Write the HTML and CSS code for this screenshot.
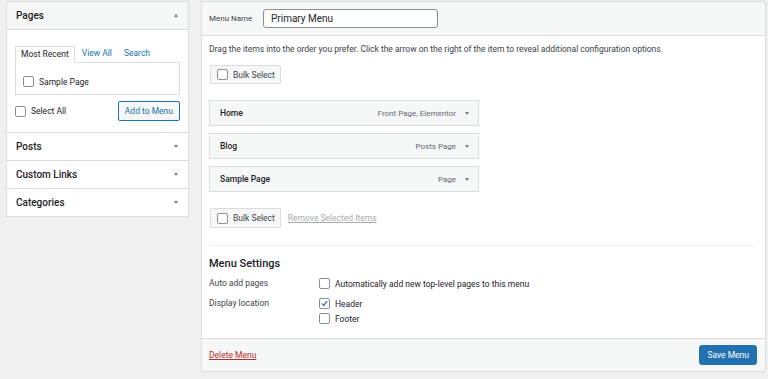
FILE: index.html
```html
<!DOCTYPE html>
<html>
	<head>
		<meta charset="UTF-8">
		<title>Menus</title>
		<link rel="stylesheet" href="styles.css">
	</head>
	<body>
		<div class="page">
			<!-- left column: add items -->
			<div class="side">
				<div class="acc-head open">
					<span>Pages</span>
					<i class="arrow up"></i>
				</div>
				<div class="acc-body">
					<div class="tabs">
						<span class="tab active">Most Recent</span>
						<span class="tab">View All</span>
						<span class="tab">Search</span>
					</div>
					<div class="tab-panel">
						<label class="check"><span class="box"></span>Sample Page</label>
					</div>
					<div class="add-row">
						<label class="check"><span class="box"></span>Select All</label>
						<span class="btn btn-outline">Add to Menu</span>
					</div>
				</div>
				<div class="acc-head">
					<span>Posts</span>
					<i class="arrow"></i>
				</div>
				<div class="acc-head">
					<span>Custom Links</span>
					<i class="arrow"></i>
				</div>
				<div class="acc-head last">
					<span>Categories</span>
					<i class="arrow"></i>
				</div>
			</div>

			<!-- right column: menu structure -->
			<div class="main">
				<div class="main-head">
					<span class="label">Menu Name</span>
					<span class="input">Primary Menu</span>
				</div>
				<div class="main-body">
					<p class="desc">Drag the items into the order you prefer. Click the arrow on the right of the item to reveal additional configuration options.</p>
					<span class="btn btn-bulk"><span class="box"></span>Bulk Select</span>

					<ul class="items">
						<li><b>Home</b><span class="meta">Front Page, Elementor</span><i class="arrow"></i></li>
						<li><b>Blog</b><span class="meta">Posts Page</span><i class="arrow"></i></li>
						<li><b>Sample Page</b><span class="meta">Page</span><i class="arrow"></i></li>
					</ul>

					<div class="bulk-row">
						<span class="btn btn-bulk"><span class="box"></span>Bulk Select</span>
						<a class="remove">Remove Selected Items</a>
					</div>

					<div class="settings">
						<h3>Menu Settings</h3>
						<div class="set-row">
							<span class="set-label">Auto add pages</span>
							<div class="set-opts">
								<label class="check"><span class="box"></span>Automatically add new top-level pages to this menu</label>
							</div>
						</div>
						<div class="set-row">
							<span class="set-label">Display location</span>
							<div class="set-opts">
								<label class="check"><span class="box checked"><svg viewBox="0 0 12 12" width="11" height="11"><path d="M2.6 6.2 L5 8.6 L9.6 2.8" fill="none" stroke="#2271b1" stroke-width="1.6"/></svg></span>Header</label>
								<label class="check"><span class="box"></span>Footer</label>
							</div>
						</div>
					</div>
				</div>
				<div class="main-foot">
					<a class="delete">Delete Menu</a>
					<span class="btn btn-primary">Save Menu</span>
				</div>
			</div>
		</div>
	</body>
</html>
```
FILE: styles.css
```css
* {
	margin: 0;
	padding: 0;
	box-sizing: border-box;
}
body {
	background: #f0f0f1;
	font-family: Roboto, "Liberation Sans", sans-serif;
	font-size: 8.5px;
	color: #1d2327;
}
.page {
	display: flex;
	align-items: flex-start;
	gap: 12px;
	padding: 1px 2px 0 6px;
}

/* left column */
.side {
	width: 183px;
	background: #fff;
	border: 1px solid #dcdcde;
}
.acc-head {
	display: flex;
	align-items: center;
	justify-content: space-between;
	height: 28px;
	padding: 0 10px 0 9px;
	font-size: 10px;
	font-weight: 500;
	border-bottom: 1px solid #dcdcde;
}
.acc-head.open {
	background: #f6f7f7;
}
.acc-head.last {
	height: 27px;
	border-bottom: 0;
}
.arrow {
	width: 0;
	height: 0;
	border-left: 2.5px solid transparent;
	border-right: 2.5px solid transparent;
	border-top: 3.5px solid #787c82;
}
.arrow.up {
	border-top: 0;
	border-bottom: 3px solid #787c82;
	border-left-width: 2px;
	border-right-width: 2px;
}
.acc-body {
	padding: 16px 8px 11px 8px;
	border-bottom: 1px solid #dcdcde;
}
.tabs {
	display: flex;
	height: 16px;
}
.tab {
	padding: 0 5px;
	line-height: 15px;
	color: #2271b1;
	margin-left: 2px;
}
.tab.active {
	color: #1d2327;
	border: 1px solid #dcdcde;
	border-bottom: 1px solid #fff;
	background: #fff;
	margin: 0 0 -1px 0;
	position: relative;
	padding: 0 5px;
}
.tab-panel {
	border: 1px solid #dcdcde;
	height: 33px;
	padding: 11px 7px;
}
.check {
	display: flex;
	align-items: center;
	height: 15px;
	gap: 5px;
	color: #1d2327;
}
.box {
	display: inline-flex;
	align-items: center;
	justify-content: center;
	width: 11px;
	height: 11px;
	border: 1px solid #8c8f94;
	border-radius: 2px;
	background: #fff;
}
.box svg {
	display: block;
}
.add-row {
	display: flex;
	align-items: center;
	justify-content: space-between;
	margin-top: 6px;
}
.btn {
	display: inline-flex;
	align-items: center;
	border-radius: 2px;
	white-space: nowrap;
}
.btn-outline {
	height: 20px;
	padding: 0 6px;
	border: 1px solid #2271b1;
	color: #2271b1;
	background: #f6f7f7;
}

/* right column */
.main {
	flex: 1;
	background: #fff;
	border: 1px solid #dcdcde;
}
.main-head {
	display: flex;
	align-items: center;
	height: 34px;
	padding: 0 7px;
	background: #f6f7f7;
	border-bottom: 1px solid #dcdcde;
}
.label {
	font-size: 8px;
	color: #3c434a;
	width: 54px;
}
.input {
	width: 175px;
	height: 19px;
	line-height: 17px;
	padding: 0 7px;
	font-size: 10px;
	border: 1px solid #8c8f94;
	border-radius: 3px;
	background: #fff;
}
.main-body {
	padding: 7px 8px 0 7px;
}
.desc {
	line-height: 13px;
	color: #3c434a;
	margin-bottom: 9px;
}
.btn-bulk {
	height: 19px;
	padding: 0 5px 0 6px;
	gap: 5px;
	background: #f6f7f7;
	border: 1px solid #dcdcde;
	color: #3c434a;
	margin-left: 1px;
}
.items {
	list-style: none;
	width: 270px;
	margin-top: 16px;
}
.items li {
	display: flex;
	align-items: center;
	height: 26px;
	padding: 0 9px 0 10px;
	background: #f6f7f7;
	border: 1px solid #dcdcde;
	margin-bottom: 7px;
}
.items b {
	font-weight: 500;
	flex: 1;
}
.meta {
	font-size: 8px;
	color: #646970;
	margin-right: 9px;
}
.bulk-row {
	display: flex;
	align-items: center;
	gap: 7px;
	margin-top: 16px;
}
.bulk-row .btn-bulk {
	height: 20px;
}
.remove {
	color: #a7aaad;
	text-decoration: underline;
}
.settings {
	margin-top: 17px;
	border-top: 1px solid #f0f0f1;
	padding-top: 10px;
	padding-bottom: 12px;
}
.settings h3 {
	font-size: 11px;
	font-weight: 500;
	line-height: 15px;
	margin-bottom: 5px;
}
.set-row {
	display: flex;
	margin-bottom: 5px;
}
.set-row:last-child {
	margin-bottom: 0;
}
.set-label {
	width: 110px;
	line-height: 15px;
	color: #3c434a;
	font-size: 8.5px;
}
.main-foot {
	display: flex;
	align-items: center;
	justify-content: space-between;
	height: 33px;
	padding: 0 8px 0 7px;
	background: #f6f7f7;
	border-top: 1px solid #dcdcde;
}
.delete {
	color: #b32d2e;
	text-decoration: underline;
}
.btn-primary {
	height: 20px;
	padding: 0 7px;
	background: #2271b1;
	color: #fff;
	border: 1px solid #2271b1;
	border-radius: 3px;
}
```
